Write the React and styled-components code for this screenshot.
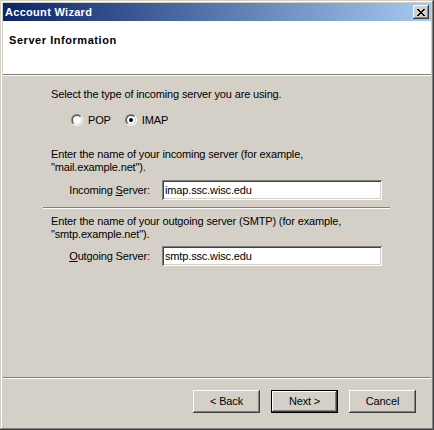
import React from "react";
import styled, { createGlobalStyle } from "styled-components";

const Global = createGlobalStyle`
  html, body { margin: 0; padding: 0; background: #d4d0c8; }
  * { box-sizing: border-box; }
`;

const Window = styled.div`
  width: 434px;
  height: 430px;
  padding: 3px;
  background: #d4d0c8;
  box-shadow: inset -1px -1px #404040, inset 1px 1px #d4d0c8,
    inset -2px -2px #808080, inset 2px 2px #ffffff;
  display: flex;
  flex-direction: column;
  font-family: "Liberation Sans", Arial, sans-serif;
  font-size: 11px;
  letter-spacing: -0.15px;
  color: #000;
`;

const TitleBar = styled.div`
  height: 18px;
  display: flex;
  align-items: center;
  justify-content: space-between;
  padding: 0 2px 0 2px;
  background: linear-gradient(to right, #0a246a, #a6caf0);
`;

const TitleText = styled.span`
  color: #fff;
  font-weight: bold;
  font-size: 11px;
  line-height: 13px;
  letter-spacing: 0.3px;
`;

const CloseButton = styled.div`
  width: 16px;
  height: 14px;
  background: #d4d0c8;
  box-shadow: inset -1px -1px #404040, inset 1px 1px #ffffff,
    inset -2px -2px #808080, inset 2px 2px #d4d0c8;
  display: flex;
  align-items: center;
  justify-content: center;
`;

const Header = styled.div`
  height: 55px;
  background: #fff;
  border-bottom: 1px solid #ffffff;
  box-shadow: inset 0 -1px #808080;
  padding: 13px 0 0 6px;
`;

const HeaderTitle = styled.div`
  font-weight: bold;
  font-size: 11px;
  line-height: 13px;
  letter-spacing: 0.55px;
`;

const Content = styled.div`
  flex: 1;
  padding: 12px 41px 0 40px;
  display: flex;
  flex-direction: column;
`;

const Para = styled.p`
  margin: ${(p) => p.$top}px 0 0 8px;
  line-height: 13px;
`;

const RadioGroup = styled.div`
  display: flex;
  align-items: center;
  gap: 14px;
  margin: 13px 0 0 28px;
  height: 12px;
`;

const RadioOption = styled.label`
  display: flex;
  align-items: center;
  gap: 5px;
  line-height: 13px;
`;

const RadioOuter = styled.span`
  width: 12px;
  height: 12px;
  border-radius: 50%;
  border: 1px solid;
  border-color: #808080 #ffffff #ffffff #808080;
  display: flex;
`;

const RadioInner = styled.span`
  width: 10px;
  height: 10px;
  border-radius: 50%;
  border: 1px solid;
  border-color: #404040 #d4d0c8 #d4d0c8 #404040;
  background: #fff;
  display: flex;
  align-items: center;
  justify-content: center;
`;

const RadioDot = styled.span`
  width: 4px;
  height: 4px;
  border-radius: 50%;
  background: #000;
`;

const FieldRow = styled.div`
  display: flex;
  align-items: center;
  margin-top: ${(p) => p.$top}px;
  height: 20px;
`;

const FieldLabel = styled.span`
  width: 107px;
  text-align: right;
  line-height: 13px;
  margin-right: 12px;
`;

const TextBox = styled.div`
  width: 220px;
  height: 20px;
  background: #fff;
  box-shadow: inset 1px 1px #808080, inset -1px -1px #ffffff,
    inset 2px 2px #404040, inset -2px -2px #d4d0c8;
  padding: 0 3px;
  display: flex;
  align-items: center;
  line-height: 13px;
`;

const Etched = styled.div`
  height: 2px;
  border-top: 1px solid #808080;
  border-bottom: 1px solid #ffffff;
  margin-top: ${(p) => p.$top || 0}px;
`;

const ButtonBar = styled.div`
  height: 48px;
  display: flex;
  justify-content: flex-end;
  align-items: flex-start;
  gap: 11px;
  padding: 11px 15px 0 0;
`;

const Button = styled.div`
  width: 67px;
  height: 23px;
  background: #d4d0c8;
  display: flex;
  align-items: center;
  justify-content: center;
  line-height: 13px;
  box-shadow: ${(p) =>
    p.$default
      ? "inset -1px -1px #000, inset 1px 1px #000, inset -2px -2px #404040, inset 2px 2px #fff, inset -3px -3px #808080"
      : "inset -1px -1px #404040, inset 1px 1px #fff, inset -2px -2px #808080, inset 2px 2px #d4d0c8"};
`;

const U = styled.span`
  text-decoration: underline;
`;

const XGlyph = () => {
  const rows = [
    "11000011",
    "01100110",
    "00111100",
    "00011000",
    "00111100",
    "01100110",
    "11000011",
  ];
  const rects = [];
  rows.forEach((r, y) =>
    r.split("").forEach((c, x) => {
      if (c === "1") rects.push(<rect key={`${x}-${y}`} x={x} y={y} width="1" height="1" />);
    })
  );
  return (
    <svg width="8" height="7" viewBox="0 0 8 7" shapeRendering="crispEdges" fill="#000">
      {rects}
    </svg>
  );
};

const Radio = ({ checked, label }) => (
  <RadioOption>
    <RadioOuter>
      <RadioInner>{checked && <RadioDot />}</RadioInner>
    </RadioOuter>
    {label}
  </RadioOption>
);

export default function App() {
  return (
    <>
      <Global />
      <Window>
        <TitleBar>
          <TitleText>Account Wizard</TitleText>
          <CloseButton>
            <XGlyph />
          </CloseButton>
        </TitleBar>
        <Header>
          <HeaderTitle>Server Information</HeaderTitle>
        </Header>
        <Content>
          <Para $top={0}>Select the type of incoming server you are using.</Para>
          <RadioGroup>
            <Radio label="POP" />
            <Radio label="IMAP" checked />
          </RadioGroup>
          <Para $top={22}>
            Enter the name of your incoming server (for example,
            <br />
            "mail.example.net").
          </Para>
          <FieldRow $top={6}>
            <FieldLabel>
              Incoming <U>S</U>erver:
            </FieldLabel>
            <TextBox>imap.ssc.wisc.edu</TextBox>
          </FieldRow>
          <Etched $top={7} />
          <Para $top={6}>
            Enter the name of your outgoing server (SMTP) (for example,
            <br />
            "smtp.example.net").
          </Para>
          <FieldRow $top={5}>
            <FieldLabel>
              <U>O</U>utgoing Server:
            </FieldLabel>
            <TextBox>smtp.ssc.wisc.edu</TextBox>
          </FieldRow>
        </Content>
        <Etched />
        <ButtonBar>
          <Button>&lt; Back</Button>
          <Button $default>Next &gt;</Button>
          <Button>Cancel</Button>
        </ButtonBar>
      </Window>
    </>
  );
}
